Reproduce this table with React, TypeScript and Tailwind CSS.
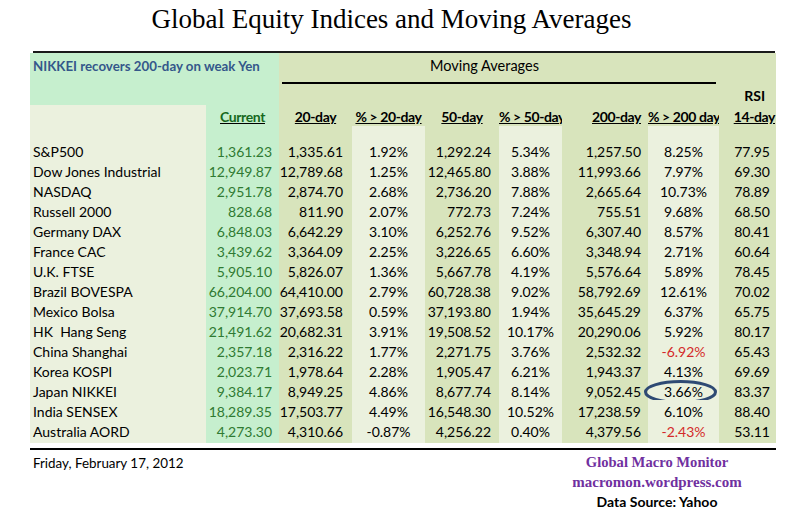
import React from "react";

const rows: string[][] = [
  ["S&P500", "1,361.23", "1,335.61", "1.92%", "1,292.24", "5.34%", "1,257.50", "8.25%", "77.95"],
  ["Dow Jones Industrial", "12,949.87", "12,789.68", "1.25%", "12,465.80", "3.88%", "11,993.66", "7.97%", "69.30"],
  ["NASDAQ", "2,951.78", "2,874.70", "2.68%", "2,736.20", "7.88%", "2,665.64", "10.73%", "78.89"],
  ["Russell 2000", "828.68", "811.90", "2.07%", "772.73", "7.24%", "755.51", "9.68%", "68.50"],
  ["Germany DAX", "6,848.03", "6,642.29", "3.10%", "6,252.76", "9.52%", "6,307.40", "8.57%", "80.41"],
  ["France CAC", "3,439.62", "3,364.09", "2.25%", "3,226.65", "6.60%", "3,348.94", "2.71%", "60.64"],
  ["U.K. FTSE", "5,905.10", "5,826.07", "1.36%", "5,667.78", "4.19%", "5,576.64", "5.89%", "78.45"],
  ["Brazil BOVESPA", "66,204.00", "64,410.00", "2.79%", "60,728.38", "9.02%", "58,792.69", "12.61%", "70.02"],
  ["Mexico Bolsa", "37,914.70", "37,693.58", "0.59%", "37,193.80", "1.94%", "35,645.29", "6.37%", "65.75"],
  ["HK  Hang Seng", "21,491.62", "20,682.31", "3.91%", "19,508.52", "10.17%", "20,290.06", "5.92%", "80.17"],
  ["China Shanghai", "2,357.18", "2,316.22", "1.77%", "2,271.75", "3.76%", "2,532.32", "-6.92%", "65.43"],
  ["Korea KOSPI", "2,023.71", "1,978.64", "2.28%", "1,905.47", "6.21%", "1,943.37", "4.13%", "69.69"],
  ["Japan NIKKEI", "9,384.17", "8,949.25", "4.86%", "8,677.74", "8.14%", "9,052.45", "3.66%", "83.37"],
  ["India SENSEX", "18,289.35", "17,503.77", "4.49%", "16,548.30", "10.52%", "17,238.59", "6.10%", "88.40"],
  ["Australia AORD", "4,273.30", "4,310.66", "-0.87%", "4,256.22", "0.40%", "4,379.56", "-2.43%", "53.11"],
];

const grid = "grid grid-cols-[176px_73px_73px_73px_74px_63px_86px_71px_57px]";
const OLIVE = "bg-[#d8e4bc]";
const LIGHT = "bg-[#ebf1de]";
const GREEN = "bg-[#c6efce]";

export default function App() {
  return (
    <div className="w-[796px] h-[511px] bg-white overflow-hidden font-['Lato',sans-serif] text-[14px] text-black">
      <div className="w-[783px] h-[51px] pt-[2px] text-center font-['Liberation_Serif',serif] text-[27px] leading-[34px] text-black">
        Global Equity Indices and Moving Averages
      </div>
      <div className="ml-[33px] w-[742px] h-[2px] bg-[#1a1a1a]" />
      <div className="ml-[30px] w-[746px]">
        {/* header top */}
        <div className={`${grid} h-[52px]`}>
          <div className={`col-span-2 ${GREEN} pl-[3px] pt-[3px] leading-[20px] font-bold text-[13.3px] whitespace-nowrap text-[#34578a]`}>
            NIKKEI recovers 200-day on weak Yen
          </div>
          <div className={`col-span-6 ${OLIVE} pt-[3px]`}>
            <div className="pl-[151px] text-[14.5px] leading-[20px]">Moving Averages</div>
            <div className="ml-[3px] mr-[3px] mt-[6px] h-[1.5px] bg-black" />
          </div>
          <div className={`${OLIVE} flex items-end justify-end pr-[4px] leading-[18px] font-bold`}>
            RSI&nbsp;&nbsp;
          </div>
        </div>
        {/* header labels */}
        <div className={`${grid} h-[21px] leading-[24px] font-bold underline tracking-[-0.4px]`}>
          <div className={LIGHT} />
          <div className={`${GREEN} text-center text-[#17691d]`}>Current</div>
          <div className={`${OLIVE} text-center`}>20-day</div>
          <div className={`${OLIVE} text-center whitespace-nowrap`}>% &gt; 20-day</div>
          <div className={`${OLIVE} text-center`}>50-day</div>
          <div className={`${OLIVE} text-center whitespace-nowrap`}>% &gt; 50-day</div>
          <div className={`${OLIVE} text-right pr-[7px]`}>200-day</div>
          <div className={`${OLIVE} text-center whitespace-nowrap`}>% &gt; 200 day</div>
          <div className={`${OLIVE} text-right pr-[1px]`}>14-day</div>
        </div>
        {/* spacer */}
        <div className={`${grid} h-[14px]`}>
          <div className={LIGHT} />
          <div className={GREEN} />
          <div className={OLIVE} />
          <div className={LIGHT} />
          <div className={OLIVE} />
          <div className={LIGHT} />
          <div className={OLIVE} />
          <div className={LIGHT} />
          <div className={OLIVE} />
        </div>
        {rows.map((r) => (
          <div key={r[0]} className={`${grid} h-[20px] leading-[23px]`}>
            <div className={`${LIGHT} pl-[3px] whitespace-pre`}>{r[0]}</div>
            <div className={`${GREEN} text-right pr-[7px] text-[#2f7a32]`}>{r[1]}</div>
            <div className={`${OLIVE} text-right pr-[9px]`}>{r[2]}</div>
            <div className={`${LIGHT} text-center`}>{r[3]}</div>
            <div className={`${OLIVE} text-right pr-[8px]`}>{r[4]}</div>
            <div className={`${LIGHT} text-center`}>{r[5]}</div>
            <div className={`${OLIVE} text-right pr-[7px]`}>{r[6]}</div>
            <div
              className={`${LIGHT} relative text-center ${
                r[7].startsWith("-") ? "text-[#d42a2a]" : ""
              }`}
            >
              {r[7]}
              {r[0] === "Japan NIKKEI" && (
                <svg
                  className="absolute left-[-5px] top-[-1px]"
                  width="76"
                  height="26"
                  viewBox="0 0 76 26"
                >
                  <ellipse cx="37.5" cy="13" rx="35" ry="10.5" fill="none" stroke="#2e4a74" strokeWidth="3" />
                </svg>
              )}
            </div>
            <div className={`${OLIVE} text-right pr-[6px]`}>{r[8]}</div>
          </div>
        ))}
      </div>
      <div className="ml-[30px] mt-[8px] w-[746px] h-[1.5px] bg-black" />
      <div className="flex">
        <div className="pl-[33px] pt-[3px] text-[13.4px] leading-[20px]">Friday, February 17, 2012</div>
        <div className="ml-auto mr-[49px] w-[180px] text-center">
          <div className="pt-[2px] font-['Liberation_Serif',serif] font-bold text-[14.6px] leading-[20px] text-[#7030a0]">
            Global Macro Monitor
          </div>
          <div className="font-['Liberation_Serif',serif] font-bold text-[15px] leading-[20px] text-[#7030a0]">
            macromon.wordpress.com
          </div>
          <div className="font-bold text-[14px] leading-[20px]">Data Source: Yahoo</div>
        </div>
      </div>
    </div>
  );
}
